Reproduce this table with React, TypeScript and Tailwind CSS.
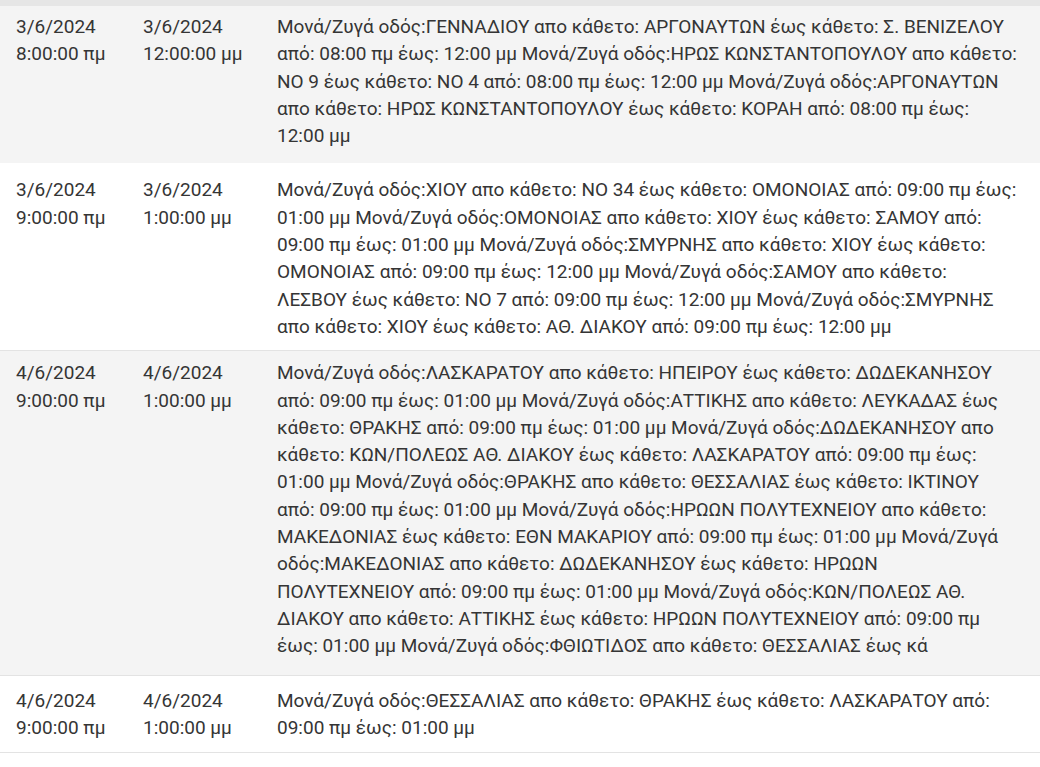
import React from 'react';

interface Closure {
    from: [string, string];
    to: [string, string];
    lines: string[];
    rowClass: string;
    cellClass: string;
}

const closures: Closure[] = [
    {
        from: ['3/6/2024', '8:00:00 πμ'],
        to: ['3/6/2024', '12:00:00 μμ'],
        lines: [
            'Μονά/Ζυγά οδός:ΓΕΝΝΑΔΙΟΥ απο κάθετο: ΑΡΓΟΝΑΥΤΩΝ έως κάθετο: Σ. ΒΕΝΙΖΕΛΟΥ',
            'από: 08:00 πμ έως: 12:00 μμ Μονά/Ζυγά οδός:ΗΡΩΣ ΚΩΝΣΤΑΝΤΟΠΟΥΛΟΥ απο κάθετο:',
            'ΝΟ 9 έως κάθετο: ΝΟ 4 από: 08:00 πμ έως: 12:00 μμ Μονά/Ζυγά οδός:ΑΡΓΟΝΑΥΤΩΝ',
            'απο κάθετο: ΗΡΩΣ ΚΩΝΣΤΑΝΤΟΠΟΥΛΟΥ έως κάθετο: ΚΟΡΑΗ από: 08:00 πμ έως:',
            '12:00 μμ',
        ],
        rowClass: 'bg-[#f4f4f4] border-t-[6px] border-[#e6e6e6]',
        cellClass: 'pt-[7px] pb-[14px]',
    },
    {
        from: ['3/6/2024', '9:00:00 πμ'],
        to: ['3/6/2024', '1:00:00 μμ'],
        lines: [
            'Μονά/Ζυγά οδός:ΧΙΟΥ απο κάθετο: ΝΟ 34 έως κάθετο: ΟΜΟΝΟΙΑΣ από: 09:00 πμ έως:',
            '01:00 μμ Μονά/Ζυγά οδός:ΟΜΟΝΟΙΑΣ απο κάθετο: ΧΙΟΥ έως κάθετο: ΣΑΜΟΥ από:',
            '09:00 πμ έως: 01:00 μμ Μονά/Ζυγά οδός:ΣΜΥΡΝΗΣ απο κάθετο: ΧΙΟΥ έως κάθετο:',
            'ΟΜΟΝΟΙΑΣ από: 09:00 πμ έως: 12:00 μμ Μονά/Ζυγά οδός:ΣΑΜΟΥ απο κάθετο:',
            'ΛΕΣΒΟΥ έως κάθετο: ΝΟ 7 από: 09:00 πμ έως: 12:00 μμ Μονά/Ζυγά οδός:ΣΜΥΡΝΗΣ',
            'απο κάθετο: ΧΙΟΥ έως κάθετο: ΑΘ. ΔΙΑΚΟΥ από: 09:00 πμ έως: 12:00 μμ',
        ],
        rowClass: 'bg-white',
        cellClass: 'pt-[13px] pb-[10px]',
    },
    {
        from: ['4/6/2024', '9:00:00 πμ'],
        to: ['4/6/2024', '1:00:00 μμ'],
        lines: [
            'Μονά/Ζυγά οδός:ΛΑΣΚΑΡΑΤΟΥ απο κάθετο: ΗΠΕΙΡΟΥ έως κάθετο: ΔΩΔΕΚΑΝΗΣΟΥ',
            'από: 09:00 πμ έως: 01:00 μμ Μονά/Ζυγά οδός:ΑΤΤΙΚΗΣ απο κάθετο: ΛΕΥΚΑΔΑΣ έως',
            'κάθετο: ΘΡΑΚΗΣ από: 09:00 πμ έως: 01:00 μμ Μονά/Ζυγά οδός:ΔΩΔΕΚΑΝΗΣΟΥ απο',
            'κάθετο: ΚΩΝ/ΠΟΛΕΩΣ ΑΘ. ΔΙΑΚΟΥ έως κάθετο: ΛΑΣΚΑΡΑΤΟΥ από: 09:00 πμ έως:',
            '01:00 μμ Μονά/Ζυγά οδός:ΘΡΑΚΗΣ απο κάθετο: ΘΕΣΣΑΛΙΑΣ έως κάθετο: ΙΚΤΙΝΟΥ',
            'από: 09:00 πμ έως: 01:00 μμ Μονά/Ζυγά οδός:ΗΡΩΩΝ ΠΟΛΥΤΕΧΝΕΙΟΥ απο κάθετο:',
            'ΜΑΚΕΔΟΝΙΑΣ έως κάθετο: ΕΘΝ ΜΑΚΑΡΙΟΥ από: 09:00 πμ έως: 01:00 μμ Μονά/Ζυγά',
            'οδός:ΜΑΚΕΔΟΝΙΑΣ απο κάθετο: ΔΩΔΕΚΑΝΗΣΟΥ έως κάθετο: ΗΡΩΩΝ',
            'ΠΟΛΥΤΕΧΝΕΙΟΥ από: 09:00 πμ έως: 01:00 μμ Μονά/Ζυγά οδός:ΚΩΝ/ΠΟΛΕΩΣ ΑΘ.',
            'ΔΙΑΚΟΥ απο κάθετο: ΑΤΤΙΚΗΣ έως κάθετο: ΗΡΩΩΝ ΠΟΛΥΤΕΧΝΕΙΟΥ από: 09:00 πμ',
            'έως: 01:00 μμ Μονά/Ζυγά οδός:ΦΘΙΩΤΙΔΟΣ απο κάθετο: ΘΕΣΣΑΛΙΑΣ έως κά',
        ],
        rowClass: 'bg-[#f4f4f4] border-t border-[#e3e3e3]',
        cellClass: 'pt-[8px] pb-[15px]',
    },
    {
        from: ['4/6/2024', '9:00:00 πμ'],
        to: ['4/6/2024', '1:00:00 μμ'],
        lines: [
            'Μονά/Ζυγά οδός:ΘΕΣΣΑΛΙΑΣ απο κάθετο: ΘΡΑΚΗΣ έως κάθετο: ΛΑΣΚΑΡΑΤΟΥ από:',
            '09:00 πμ έως: 01:00 μμ',
        ],
        rowClass: 'bg-white border-y border-[#e3e3e3]',
        cellClass: 'pt-[11px] pb-[11px]',
    },
];

const DateCell: React.FC<{ value: [string, string]; className: string }> = ({ value, className }) => (
    <td className={`align-top whitespace-nowrap ${className}`}>
        {value[0]}
        <br />
        {value[1]}
    </td>
);

export default function App() {
    return (
        <div className="min-h-[767px] w-[1040px] bg-white font-['Roboto',sans-serif] text-[19px] leading-[27.3px] text-[#353535]">
            <table className="w-full table-fixed border-collapse">
                <colgroup>
                    <col className="w-[128px]" />
                    <col className="w-[134px]" />
                    <col />
                </colgroup>
                <tbody>
                    {closures.map((c, i) => (
                        <tr key={i} className={c.rowClass}>
                            <DateCell value={c.from} className={`pl-[16px] pr-2 ${c.cellClass}`} />
                            <DateCell value={c.to} className={`pl-[15px] pr-2 ${c.cellClass}`} />
                            <td className={`align-top pl-[15px] pr-3 whitespace-nowrap ${c.cellClass}`}>
                                {c.lines.map((line, j) => (
                                    <React.Fragment key={j}>
                                        {j > 0 && <br />}
                                        {line}
                                    </React.Fragment>
                                ))}
                            </td>
                        </tr>
                    ))}
                </tbody>
            </table>
        </div>
    );
}
